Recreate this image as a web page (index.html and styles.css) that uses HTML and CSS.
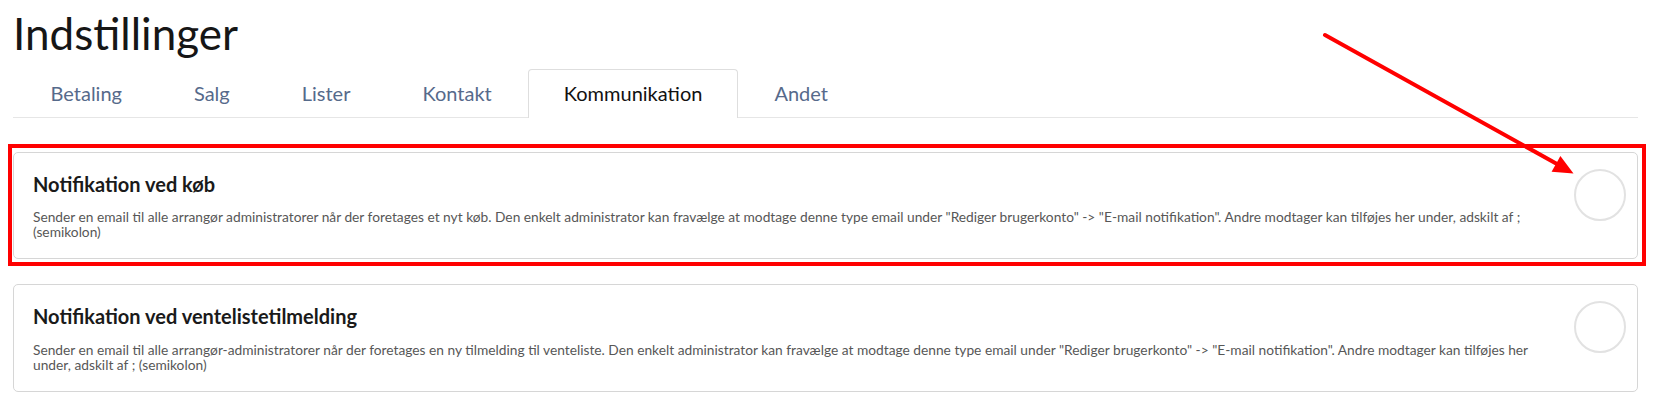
FILE: index.html
```html
<!DOCTYPE html>
<html lang="da">
<head>
<meta charset="utf-8">
<title>Indstillinger</title>
<link rel="stylesheet" href="styles.css">
</head>
<body>
<div class="page">
  <h1 class="page-title">Indstillinger</h1>

  <nav class="tabs">
    <a class="tab">Betaling</a>
    <a class="tab">Salg</a>
    <a class="tab">Lister</a>
    <a class="tab">Kontakt</a>
    <a class="tab tab--active">Kommunikation</a>
    <a class="tab">Andet</a>
  </nav>

  <section class="settings">
    <div class="setting">
      <div class="setting-text">
        <h2 class="setting-title">Notifikation ved køb</h2>
        <p class="setting-desc">Sender en email til alle arrangør administratorer når der foretages et nyt køb. Den enkelt administrator kan fravælge at modtage denne type email under "Rediger brugerkonto" -&gt; "E-mail notifikation". Andre modtager kan tilføjes her under, adskilt af ; (semikolon)</p>
      </div>
      <span class="toggle"></span>
      <span class="callout"></span>
    </div>

    <div class="setting">
      <div class="setting-text">
        <h2 class="setting-title">Notifikation ved ventelistetilmelding</h2>
        <p class="setting-desc">Sender en email til alle arrangør-administratorer når der foretages en ny tilmelding til venteliste. Den enkelt administrator kan fravælge at modtage denne type email under "Rediger brugerkonto" -&gt; "E-mail notifikation". Andre modtager kan tilføjes her under, adskilt af ; (semikolon)</p>
      </div>
      <span class="toggle"></span>
    </div>
  </section>
</div>

<svg class="pointer" width="1659" height="414" viewBox="0 0 1659 414">
  <line x1="1325" y1="35" x2="1557" y2="164" stroke="#ff0000" stroke-width="4" stroke-linecap="round"/>
  <polygon points="1573.5,173.5 1560.4,155.9 1551.6,171.7" fill="#ff0000"/>
</svg>
</body>
</html>
```

FILE: styles.css
```css
html, body {
  margin: 0;
  padding: 0;
  background: #ffffff;
}

body {
  font-family: Lato, "Liberation Sans", sans-serif;
  color: #1b1b1b;
  position: relative;
  width: 1659px;
  height: 414px;
  overflow: hidden;
}

.page {
  margin-left: 13px;
  width: 1625px;
}

.page-title {
  margin: 7px 0 0;
  font-size: 44px;
  font-weight: 400;
  line-height: 1.2;
  color: #161616;
}

/* tab strip */
.tabs {
  display: flex;
  margin-top: 9.5px;
  padding-left: 1.5px;
  border-bottom: 1px solid #e6e6e6;
}

.tab {
  padding: 11px 35px 12px;
  border: 1px solid transparent;
  border-bottom: none;
  border-radius: 4px 4px 0 0;
  font-size: 20px;
  line-height: 24px;
  color: #566a8b;
  text-decoration: none;
}

.tab--active {
  border-color: #dedede;
  background: #ffffff;
  margin-bottom: -1px;
  color: #111111;
}

/* setting cards */
.settings {
  display: flex;
  flex-direction: column;
  gap: 25px;
  margin-top: 33.5px;
}

.setting {
  position: relative;
  display: flex;
  align-items: flex-start;
  padding: 16px 11px 19px 19px;
  border: 1px solid #d6d6d6;
  border-radius: 5px;
}

.setting-text {
  flex: 1;
  min-width: 0;
}

.setting-title {
  margin: 3px 0 0;
  font-size: 20px;
  font-weight: 700;
  line-height: 1.2;
  color: #1a1a1a;
}

.setting-desc {
  margin: 13.5px 0 0;
  font-size: 13.75px;
  line-height: 15px;
  color: #575757;
}

.toggle {
  flex: none;
  width: 48px;
  height: 48px;
  margin-left: 30px;
  border: 2px solid #e2e2e2;
  border-radius: 50%;
}

/* red highlight frame around a card */
.callout {
  position: absolute;
  top: -9px;
  left: -6px;
  right: -9px;
  bottom: -8px;
  border: 4.5px solid #ff0000;
  pointer-events: none;
}

.pointer {
  position: absolute;
  left: 0;
  top: 0;
  pointer-events: none;
}
```
